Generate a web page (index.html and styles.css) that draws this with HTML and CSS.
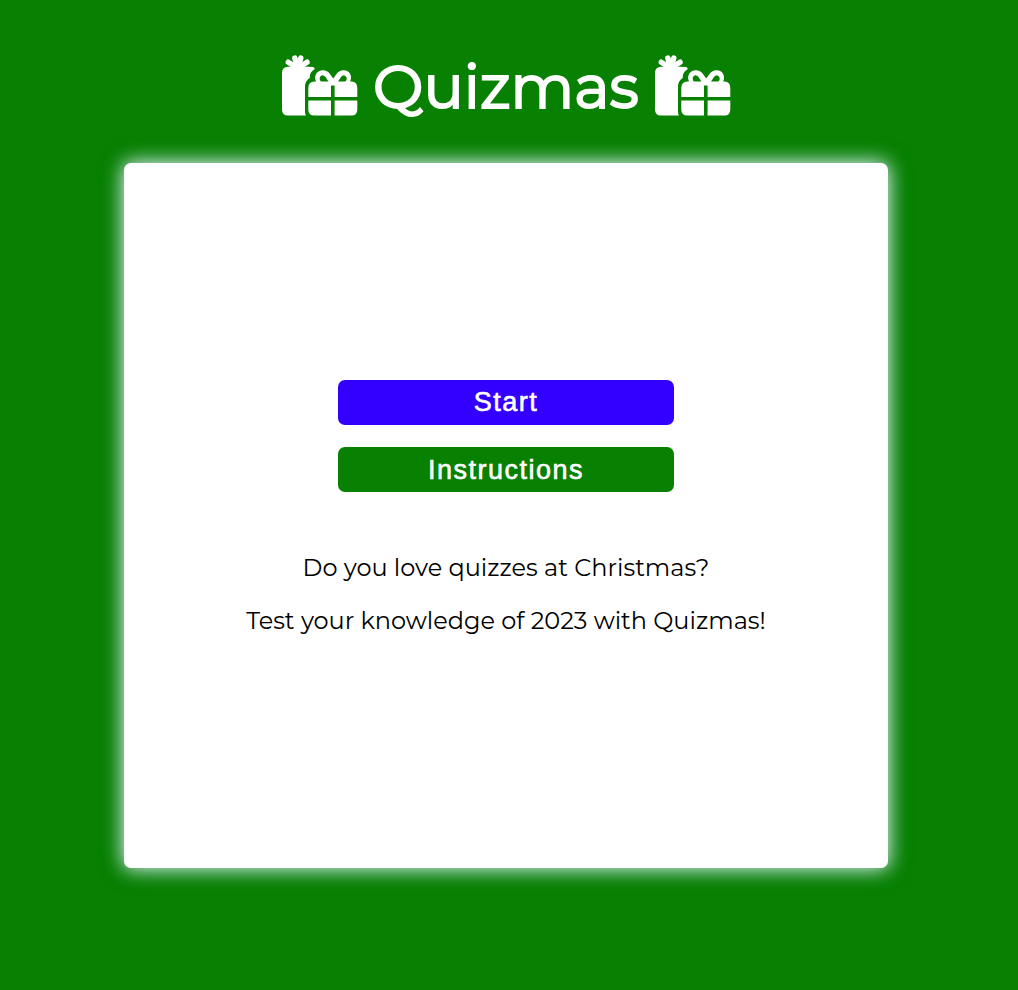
FILE: index.html
```html
<!DOCTYPE html>
<html lang="en">
<head>
<meta charset="utf-8">
<title>Quizmas</title>
<link rel="stylesheet" href="styles.css">
</head>
<body>
<svg class="defs" width="0" height="0" aria-hidden="true">
  <symbol id="gifts" viewBox="0 0 76 61">
    <path fill="none" stroke="#fff" stroke-width="5.400" stroke-linecap="round" d="M15.700 13L6.300 7.200M15.700 13L12.800 3.100M15.700 13L18.800 3.100M15.700 13L25 7.200"/>
    <path d="M6 60.500Q0 60.500 0 54.500V18Q0 12 6 11.800L11 11.500L15.700 7L21 11.500L31 12Q33.400 13 32.500 14.200Q30 15.700 28.700 18Q27.500 20 27.700 23Q23.500 25.500 23 30.500V56.500Q23 59 24 60.500Z"/>
    <path fill-rule="evenodd" d="M26.300 42V33Q26.300 26.500 32.500 26.500H34Q32.800 24 33.200 21.500Q34.500 15.500 40.500 15.300Q45 15 48 19L51.200 23.500L54.500 19Q57.500 15 62 15.300Q68 15.700 69 21.500Q69.300 24 68.200 26.500H69.500Q75.300 26.500 75.300 33V42H52.600V30.500H49V42ZM39 26.500H46.500L43.500 22Q41.700 19.800 39.500 20.500Q37.200 21.700 37.700 24.300Q38 25.800 39 26.500ZM56 26.500H63.300Q64.700 25.500 64.800 23.700Q64.700 21 62.500 20.400Q60.500 20 59 22Z"/>
    <path d="M26.300 45.600H49V60.500H32.500Q26.300 60.500 26.300 54.500ZM52.600 45.600H75.300V54.500Q75.300 60.500 69.500 60.500H52.600Z"/>
  </symbol>
</svg>
<header class="header">
  <svg class="gift" aria-hidden="true"><use href="#gifts"/></svg>
  <h1 class="title">Quizmas</h1>
  <svg class="gift" aria-hidden="true"><use href="#gifts"/></svg>
</header>
<main class="card">
  <button class="button start">Start</button>
  <button class="button instructions">Instructions</button>
  <p class="text question">Do you love quizzes at Christmas?</p>
  <p class="text tagline">Test your knowledge of 2023 with Quizmas!</p>
</main>
</body>
</html>
```

FILE: styles.css
```css
* { box-sizing: border-box; }
body {
  margin: 0;
  width: 1012px;
  min-height: 990px;
  background: #088002;
  font-family: Montserrat, Inter, sans-serif;
}
html { background: #088002; }
.defs { display: block; }
.header {
  display: flex;
  justify-content: center;
  height: 163px;
  padding-top: 55px;
}
.gift { width: 76px; height: 61px; fill: #fff; flex: none; }
.title {
  width: 297px;
  margin: 0;
  color: #fff;
  font-size: 60px;
  font-weight: 400;
  line-height: 64px;
  text-align: center;
  white-space: nowrap;
  -webkit-text-stroke: 2px #fff;
}
.card {
  display: flex;
  flex-direction: column;
  align-items: center;
  width: 764px;
  height: 705px;
  margin: 0 auto;
  padding-top: 217px;
  border-radius: 7px;
  background: #fff;
  box-shadow: 0 0 19px rgba(255, 255, 255, .9), 0 0 23px rgba(60, 160, 120, .8);
}
.button {
  width: 336px;
  height: 45px;
  padding: 0;
  border: 0;
  border-radius: 7px;
  color: #fff;
  font: 27px/45px "Liberation Sans", Arial, sans-serif;
  letter-spacing: 1.5px;
  -webkit-text-stroke: .6px #fff;
}
.start { background: #30f; }
.instructions { margin-top: 22px; padding-top: 1px; background: #088002; }
.text { margin: 0; color: #000; font-size: 24px; line-height: 30px; white-space: nowrap; }
.question { margin-top: 61px; }
.tagline { margin-top: 23px; }
```
